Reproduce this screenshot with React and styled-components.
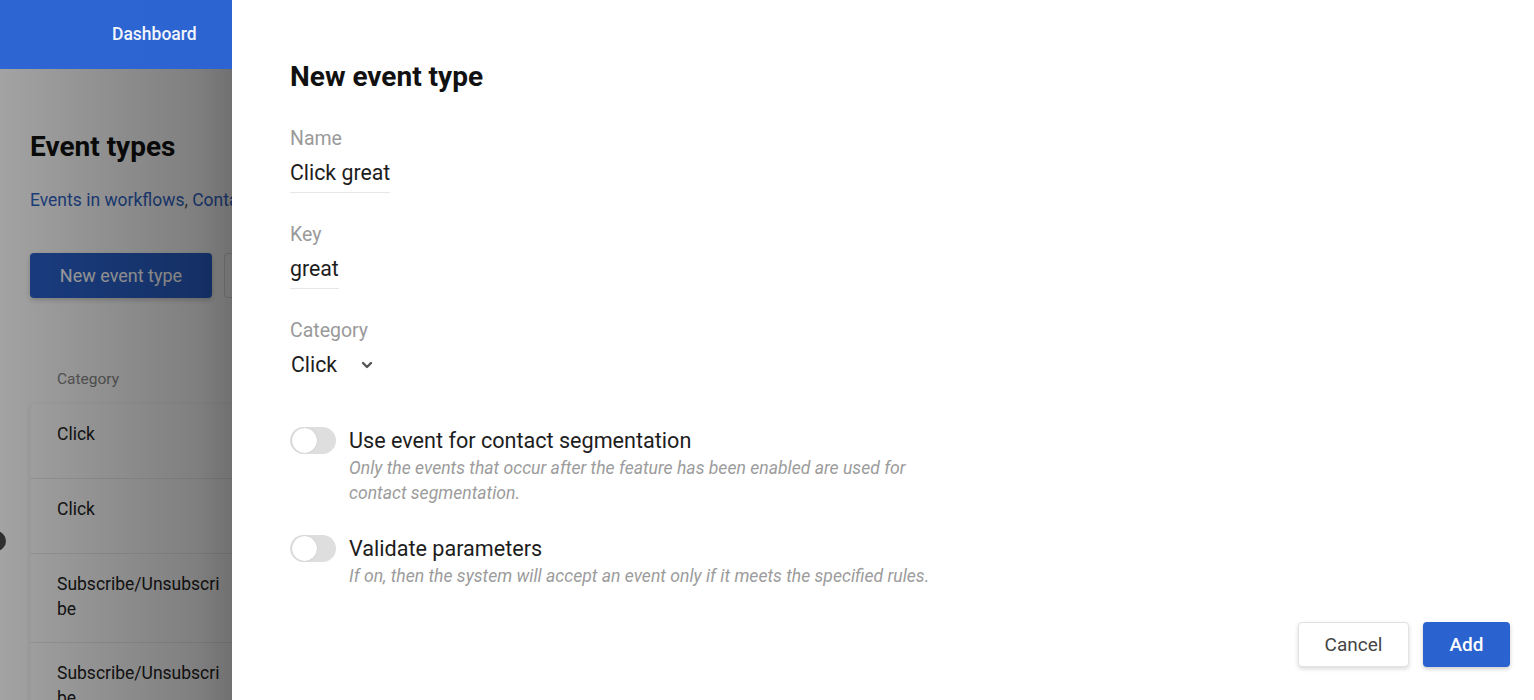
import styled, { createGlobalStyle } from "styled-components";
import { ChevronDown } from "lucide-react";

const GlobalStyle = createGlobalStyle`
    html, body {
        margin:0;
        padding:0;
        background:#fff;
        font-family:Roboto, "Noto Sans", sans-serif;
        overflow:hidden;
    }
    * { box-sizing:border-box; }
`

const rows = [
    "Click",
    "Click",
    "Subscribe/Unsubscribe",
    "Subscribe/Unsubscribe",
]

const App = () => {
    return (
        <>
            <GlobalStyle />
            <Page>
                <Header>
                    <NavLink>Dashboard</NavLink>
                </Header>
                <Content>
                    <PageTitle>Event types</PageTitle>
                    <Breadcrumbs>
                        <a>Events in workflows</a>, <a>Contact segmentation</a>
                    </Breadcrumbs>
                    <Actions>
                        <PrimaryButton>New event type</PrimaryButton>
                        <OutlineButton>Import</OutlineButton>
                    </Actions>
                    <ColumnHead>Category</ColumnHead>
                    <Table>
                        {rows.map((r, i) => (
                            <Row key={i}>
                                <Cell>{r}</Cell>
                            </Row>
                        ))}
                    </Table>
                </Content>
                <FloatDot />
            </Page>

            <Overlay />

            <Drawer>
                <DrawerTitle>New event type</DrawerTitle>

                <Field>
                    <Label>Name</Label>
                    <Value>Click great</Value>
                </Field>
                <Field>
                    <Label>Key</Label>
                    <Value>great</Value>
                </Field>
                <Field>
                    <Label>Category</Label>
                    <Select>
                        Click
                        <ChevronDown size={16} strokeWidth={3.6} color="#555" />
                    </Select>
                </Field>

                <Toggles>
                    <ToggleRow>
                        <Switch><Knob /></Switch>
                        <ToggleText>
                            <ToggleLabel>Use event for contact segmentation</ToggleLabel>
                            <Hint>Only the events that occur after the feature has been enabled are used for contact segmentation.</Hint>
                        </ToggleText>
                    </ToggleRow>
                    <ToggleRow>
                        <Switch><Knob /></Switch>
                        <ToggleText>
                            <ToggleLabel>Validate parameters</ToggleLabel>
                            <Hint>If on, then the system will accept an event only if it meets the specified rules.</Hint>
                        </ToggleText>
                    </ToggleRow>
                </Toggles>

                <Footer>
                    <CancelButton>Cancel</CancelButton>
                    <AddButton>Add</AddButton>
                </Footer>
            </Drawer>
        </>
    )
}

export default App;

const Page = styled.div`
    width:100%;
    height:700px;
    position:relative;
    background:#fff;
`

const Header = styled.header`
    height:69px;
    background:linear-gradient(90deg, #2d65d2, #245bc6);
    display:flex;
    align-items:center;
    padding-left:112px;
`

const NavLink = styled.span`
    color:#f2f5fc;
    font-size:17.5px;
    font-weight:500;
    margin-top:-2px;
`

const Content = styled.div`
    padding:58px 30px 0;
    display:flex;
    flex-direction:column;
`

const PageTitle = styled.h1`
    margin:0;
    font-size:28px;
    font-weight:700;
    color:#111;
    line-height:40px;
`

const Breadcrumbs = styled.div`
    margin-top:20px;
    font-size:17.5px;
    line-height:26px;
    color:#555;
    white-space:nowrap;

    a { color:#2f63c4; }
`

const Actions = styled.div`
    margin-top:40px;
    display:flex;
    gap:12px;
`

const PrimaryButton = styled.button`
    height:45px;
    width:182px;
    border:none;
    border-radius:4px;
    background:#2a61cc;
    color:#fff;
    font-family:inherit;
    font-size:18px;
    box-shadow:0 2px 5px rgba(0,0,0,0.2);
`

const OutlineButton = styled.button`
    height:45px;
    width:140px;
    border:1px solid #ddd;
    border-radius:4px;
    background:#fff;
    color:#333;
    font-family:inherit;
    font-size:18px;
`

const ColumnHead = styled.div`
    margin-top:70px;
    padding-left:27px;
    font-size:15.5px;
    color:#888;
    line-height:22px;
`

const Table = styled.div`
    margin-top:14px;
    width:600px;
    background:#fff;
    border-radius:6px;
    box-shadow:0 1px 4px rgba(0,0,0,0.12);
`

const Row = styled.div`
    padding:18px 0 20px 27px;
    border-bottom:1px solid #ececec;
    min-height:75px;
`

const Cell = styled.div`
    width:166px;
    font-size:17.5px;
    line-height:25px;
    color:#222;
    word-break:break-all;
`

const FloatDot = styled.div`
    position:absolute;
    left:-14px;
    top:531px;
    width:20px;
    height:20px;
    border-radius:50%;
    background:#4a4a4a;
`

const Overlay = styled.div`
    position:fixed;
    top:69px;
    left:0;
    width:232px;
    bottom:0;
    background:linear-gradient(90deg, rgba(0,0,0,0.36), rgba(0,0,0,0.5) 85%, rgba(0,0,0,0.56));
`

const Drawer = styled.aside`
    position:fixed;
    top:0;
    bottom:0;
    left:232px;
    right:0;
    background:#fff;
    padding:61px 24px 33px 58px;
    display:flex;
    flex-direction:column;
`

const DrawerTitle = styled.h2`
    margin:0 0 34px;
    font-size:28px;
    font-weight:700;
    line-height:32px;
    color:#111;
`

const Field = styled.div`
    display:flex;
    flex-direction:column;
    align-items:flex-start;
    margin-bottom:30px;
`

const Label = styled.div`
    font-size:19.5px;
    line-height:24px;
    color:#9a9a9a;
    margin-bottom:8px;
`

const Value = styled.div`
    font-size:21.3px;
    line-height:28px;
    color:#1d1d1d;
    padding-bottom:5px;
    border-bottom:1px solid #e6e6e6;
`

const Select = styled.div`
    display:flex;
    align-items:center;
    gap:22px;
    font-size:21.3px;
    line-height:28px;
    color:#1d1d1d;
    margin-left:1px;
`

const Toggles = styled.div`
    margin-top:18px;
    display:flex;
    flex-direction:column;
    gap:29px;
`

const ToggleRow = styled.div`
    display:flex;
    gap:13px;
    align-items:flex-start;
`

const Switch = styled.div`
    width:46px;
    height:27px;
    border-radius:14px;
    background:#dedede;
    display:flex;
    align-items:center;
    padding:0 2px;
    flex-shrink:0;
`

const Knob = styled.div`
    width:25px;
    height:25px;
    border-radius:50%;
    background:#fff;
    box-shadow:0 0 1px rgba(0,0,0,0.25);
`

const ToggleText = styled.div`
    display:flex;
    flex-direction:column;
`

const ToggleLabel = styled.div`
    font-size:21.6px;
    line-height:28px;
    color:#1d1d1d;
`

const Hint = styled.div`
    max-width:600px;
    margin-top:1px;
    font-size:17.6px;
    font-style:italic;
    line-height:25px;
    color:#9c9c9c;
`

const Footer = styled.div`
    margin-top:auto;
    display:flex;
    justify-content:flex-end;
    gap:14px;
`

const CancelButton = styled.button`
    width:111px;
    height:45px;
    border:1px solid #e2e2e2;
    border-radius:4px;
    background:#fff;
    color:#444;
    font-family:inherit;
    font-size:19px;
    box-shadow:0 2px 4px rgba(0,0,0,0.15);
`

const AddButton = styled.button`
    width:87px;
    height:45px;
    border:none;
    border-radius:4px;
    background:#2a63cf;
    color:#fff;
    font-family:inherit;
    font-size:19px;
    font-weight:500;
    box-shadow:0 2px 4px rgba(0,0,0,0.2);
`
